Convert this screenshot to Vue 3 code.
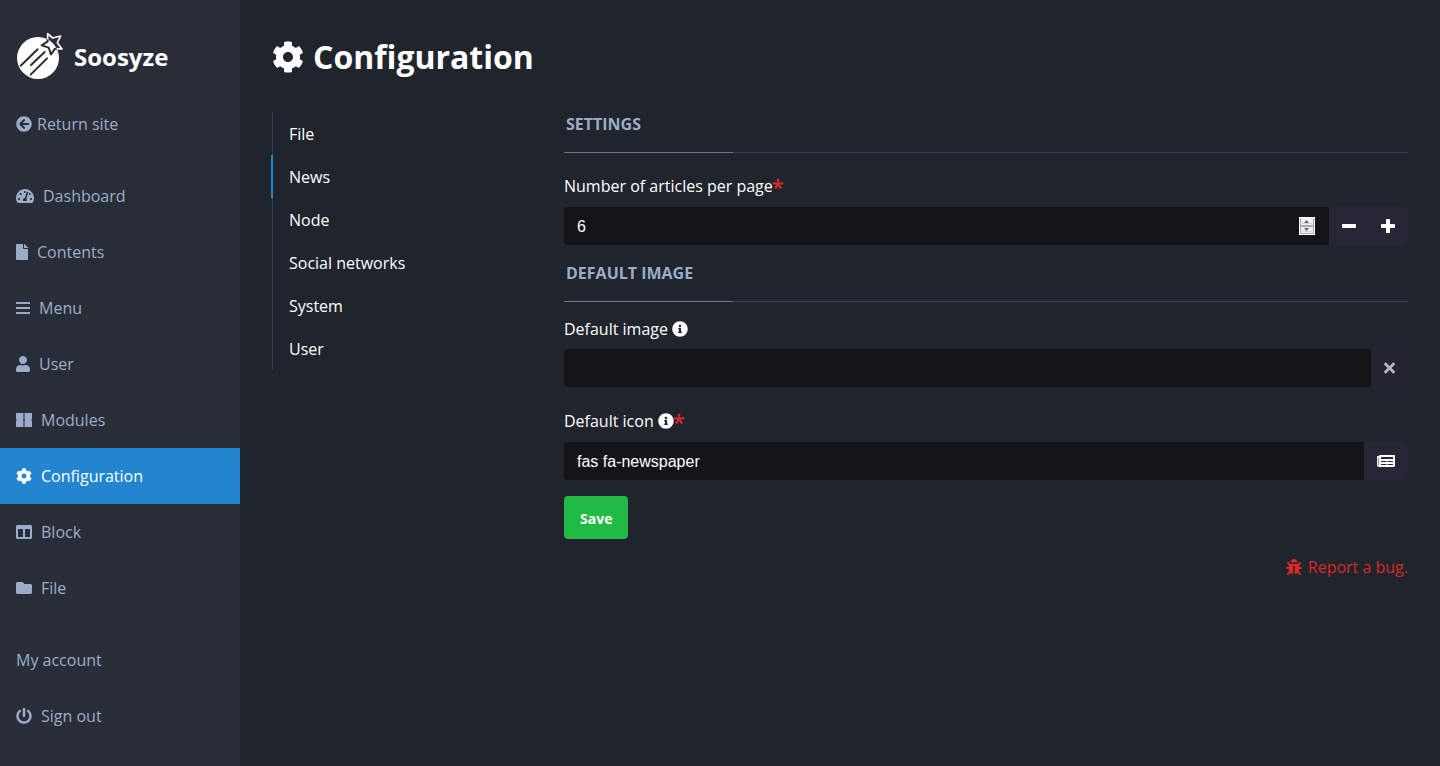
<script setup>
import { h, ref } from 'vue'

const icons = {
  back: { w: 512, d: 'M256 504C119 504 8 393 8 256S119 8 256 8s248 111 248 248-111 248-248 248zm28.9-143.6L209.4 288H392c13.3 0 24-10.7 24-24v-16c0-13.3-10.7-24-24-24H209.4l75.5-72.4c9.7-9.3 9.9-24.8.4-34.3l-11-10.9c-9.4-9.4-24.6-9.4-33.9 0L107.7 239c-9.4 9.4-9.4 24.6 0 33.9l132.7 132.7c9.4 9.4 24.6 9.4 33.9 0l11-10.9c9.5-9.5 9.3-25-.4-34.3z' },
  gauge: { w: 576, d: 'M288 32C128.94 32 0 160.94 0 320c0 52.8 14.25 102.26 39.06 144.8 5.61 9.62 16.3 15.2 27.44 15.2h443c11.14 0 21.83-5.58 27.44-15.2C561.75 422.26 576 372.8 576 320c0-159.06-128.94-288-288-288zm0 64c14.71 0 26.58 10.13 30.32 23.65-1.11 2.26-2.64 4.23-3.45 6.67l-9.22 27.67c-5.13 3.49-10.97 6.01-17.64 6.01-17.67 0-32-14.33-32-32S270.33 96 288 96zM96 384c-17.67 0-32-14.33-32-32s14.33-32 32-32 32 14.33 32 32-14.33 32-32 32zm48-160c-17.67 0-32-14.33-32-32s14.33-32 32-32 32 14.33 32 32-14.33 32-32 32zm246.77-72.41l-61.33 184C343.13 347.33 352 364.54 352 384c0 11.72-3.38 22.55-8.88 32H232.88c-5.5-9.45-8.88-20.28-8.88-32 0-33.94 26.5-61.43 59.9-63.59l61.34-184.01c4.17-12.56 17.73-19.45 30.36-15.17 12.57 4.19 19.35 17.79 15.17 30.36zm14.66 57.2l15.52-46.55c3.47-1.29 7.13-2.23 11.05-2.23 17.67 0 32 14.33 32 32s-14.33 32-32 32c-11.38-.01-20.89-6.28-26.57-15.22zM480 384c-17.67 0-32-14.33-32-32s14.33-32 32-32 32 14.33 32 32-14.33 32-32 32z' },
  file: { w: 384, d: 'M224 136V0H24C10.7 0 0 10.7 0 24v464c0 13.3 10.7 24 24 24h336c13.3 0 24-10.7 24-24V160H248c-13.2 0-24-10.8-24-24zm160-14.1v6.1H256V0h6.1c6.4 0 12.5 2.5 17 7l97.9 98c4.500 4.500 7 10.600 7 16.900z' },
  bars: { w: 448, d: 'M8 64h432q8 0 8 8v48q0 8-8 8H8q-8 0-8-8V72q0-8 8-8zM8 224h432q8 0 8 8v48q0 8-8 8H8q-8 0-8-8v-48q0-8 8-8zM8 384h432q8 0 8 8v48q0 8-8 8H8q-8 0-8-8v-48q0-8 8-8z' },
  user: { w: 448, d: 'M224 256c70.7 0 128-57.3 128-128S294.7 0 224 0 96 57.3 96 128s57.3 128 128 128zm89.6 32h-16.7c-22.2 10.2-46.9 16-72.9 16s-50.6-5.8-72.9-16h-16.7C60.2 288 0 348.2 0 422.400V464c0 26.500 21.500 48 48 48h352c26.500 0 48-21.500 48-48v-41.600c0-74.200-60.200-134.400-134.400-134.400z' },
  modules: { w: 512, d: 'M0 32H240V228L220 256L240 284V480H0V292L24 256L0 220ZM272 32H512V220L488 256L512 292V480H272V284L292 256L272 228Z' },
  cog: { w: 512, d: 'M487.4 315.7l-42.6-24.6c4.3-23.2 4.3-47 0-70.2l42.6-24.6c4.9-2.8 7.1-8.6 5.5-14-11.1-35.6-30-67.8-54.7-94.6-3.8-4.1-10-5.1-14.8-2.3L380.8 110c-17.9-15.4-38.5-27.3-60.8-35.1V25.8c0-5.6-3.9-10.5-9.4-11.7-36.7-8.2-74.3-7.8-109.2 0-5.5 1.2-9.4 6.1-9.4 11.7V75c-22.2 7.9-42.8 19.8-60.8 35.1L88.7 85.500c-4.900-2.800-11-1.900-14.800 2.300-24.700 26.700-43.600 58.900-54.700 94.600-1.700 5.400.6 11.200 5.500 14L67.300 221c-4.300 23.200-4.300 47 0 70.200l-42.600 24.600c-4.900 2.800-7.100 8.600-5.500 14 11.100 35.600 30 67.800 54.700 94.600 3.800 4.100 10 5.100 14.800 2.300l42.600-24.600c17.900 15.400 38.500 27.300 60.800 35.100v49.200c0 5.600 3.900 10.500 9.400 11.700 36.700 8.200 74.300 7.800 109.200 0 5.500-1.200 9.400-6.100 9.400-11.700v-49.200c22.200-7.900 42.800-19.800 60.800-35.100l42.600 24.600c4.900 2.800 11 1.900 14.800-2.300 24.700-26.700 43.600-58.900 54.700-94.600 1.500-5.500-.7-11.300-5.600-14.100zM256 336c-44.100 0-80-35.900-80-80s35.900-80 80-80 80 35.900 80 80-35.900 80-80 80z' },
  columns: { w: 512, d: 'M464 32H48C21.49 32 0 53.49 0 80v352c0 26.510 21.490 48 48 48h416c26.510 0 48-21.490 48-48V80c0-26.510-21.490-48-48-48zM224 416H64V160h160v256zm224 0H288V160h160v256z' },
  folder: { w: 512, d: 'M464 128H272l-64-64H48C21.490 64 0 85.490 0 112v288c0 26.510 21.490 48 48 48h416c26.510 0 48-21.490 48-48V176c0-26.510-21.490-48-48-48z' },
  power: { w: 512, d: 'M400 54.1c63 45 104 118.6 104 201.9 0 136.8-110.8 247.7-247.5 248C120 504.3 8.2 393 8 256.4 7.9 173.1 48.9 99.3 111.8 54.2c11.7-8.3 28-4.8 35 7.7L162.6 90c5.9 10.5 3.1 23.8-6.6 31-41.5 30.8-68 79.6-68 134.9-.1 92.3 74.5 168.1 168 168.1 91.6 0 168.6-74.2 168-169.1-.3-51.8-24.7-101.8-68.1-134-9.7-7.2-12.4-20.5-6.5-30.9l15.8-28.1c7-12.4 23.2-16.1 34.8-7.8zM296 264V24c0-13.300-10.700-24-24-24h-32c-13.300 0-24 10.700-24 24v240c0 13.300 10.700 24 24 24h32c13.300 0 24-10.700 24-24z' },
  info: { w: 512, d: 'M256 8C119.043 8 8 119.083 8 256c0 136.997 111.043 248 248 248s248-111.003 248-248C504 119.083 392.957 8 256 8zm0 110c23.196 0 42 18.804 42 42s-18.804 42-42 42-42-18.804-42-42 18.804-42 42-42zm56 254c0 6.627-5.373 12-12 12h-88c-6.627 0-12-5.373-12-12v-24c0-6.627 5.373-12 12-12h12v-64h-12c-6.627 0-12-5.373-12-12v-24c0-6.627 5.373-12 12-12h64c6.627 0 12 5.373 12 12v100h12c6.627 0 12 5.373 12 12v24z' },
  minus: { w: 448, d: 'M416 192H32c-17.67 0-32 14.33-32 32v64c0 17.67 14.33 32 32 32h384c17.67 0 32-14.33 32-32v-64c0-17.67-14.33-32-32-32z' },
  plus: { w: 448, d: 'M416 192H288V64c0-17.67-14.33-32-32-32h-64c-17.67 0-32 14.33-32 32v128H32c-17.67 0-32 14.33-32 32v64c0 17.67 14.33 32 32 32h128v128c0 17.67 14.33 32 32 32h64c17.67 0 32-14.33 32-32V320h128c17.67 0 32-14.33 32-32v-64c0-17.67-14.33-32-32-32z' },
  times: { w: 352, d: 'M242.72 256l100.07-100.07c12.28-12.28 12.28-32.19 0-44.48l-22.24-22.24c-12.28-12.28-32.19-12.28-44.48 0L176 189.28 75.93 89.21c-12.28-12.28-32.19-12.28-44.48 0L9.21 111.45c-12.28 12.28-12.28 32.19 0 44.48L109.28 256 9.21 356.07c-12.28 12.28-12.28 32.19 0 44.48l22.24 22.24c12.28 12.28 32.2 12.28 44.48 0L176 322.72l100.07 100.07c12.28 12.28 32.2 12.28 44.48 0l22.24-22.24c12.28-12.28 12.28-32.19 0-44.48L242.72 256z' },
  newspaper: { w: 576, d: 'M552 64H88c-13.255 0-24 10.745-24 24v8H24c-13.255 0-24 10.745-24 24v272c0 30.928 25.072 56 56 56h472c26.51 0 48-21.49 48-48V88c0-13.255-10.745-24-24-24zM56 400a8 8 0 0 1-8-8V144h16v248a8 8 0 0 1-8 8zm236-16H140c-6.627 0-12-5.373-12-12v-8c0-6.627 5.373-12 12-12h152c6.627 0 12 5.373 12 12v8c0 6.627-5.373 12-12 12zm208 0H348c-6.627 0-12-5.373-12-12v-8c0-6.627 5.373-12 12-12h152c6.627 0 12 5.373 12 12v8c0 6.627-5.373 12-12 12zm-208-96H140c-6.627 0-12-5.373-12-12v-8c0-6.627 5.373-12 12-12h152c6.627 0 12 5.373 12 12v8c0 6.627-5.373 12-12 12zm208 0H348c-6.627 0-12-5.373-12-12v-8c0-6.627 5.373-12 12-12h152c6.627 0 12 5.373 12 12v8c0 6.627-5.373 12-12 12zm0-96H140c-6.627 0-12-5.373-12-12v-40c0-6.627 5.373-12 12-12h360c6.627 0 12 5.373 12 12v40c0 6.627-5.373 12-12 12z' },
  bug: { w: 512, d: 'M511.988 288.9c-.478 17.43-15.217 31.1-32.653 31.1H424v16c0 21.864-4.882 42.584-13.6 61.145l60.228 60.228c12.496 12.497 12.496 32.758 0 45.255-12.498 12.497-32.759 12.496-45.256 0l-54.736-54.736C345.886 467.965 314.351 480 280 480V236c0-6.627-5.373-12-12-12h-24c-6.627 0-12 5.373-12 12v244c-34.351 0-65.886-12.035-90.636-32.108l-54.736 54.736c-12.498 12.497-32.759 12.496-45.256 0-12.496-12.497-12.496-32.758 0-45.255l60.228-60.228C92.882 378.584 88 357.864 88 336v-16H32.666C15.23 320 .491 306.33.013 288.9-.484 270.816 13.028 256 30 256h58v-58.745l-46.628-46.628c-12.496-12.497-12.496-32.758 0-45.255 12.498-12.497 32.758-12.497 45.256 0L141.255 160h229.489l54.627-54.627c12.498-12.497 32.758-12.497 45.256 0 12.496 12.497 12.496 32.758 0 45.255L424 197.255V256h58c16.972 0 30.484 14.816 29.988 32.9zM257 0c-61.856 0-112 50.144-112 112h224C369 50.144 318.856 0 257 0z' },
}

const Icon = (props) => h('svg', {
  class: 'icon',
  viewBox: `0 0 ${icons[props.name].w} 512`,
  width: icons[props.name].w * props.size / 512,
  height: props.size,
  fill: 'currentColor',
  'aria-hidden': 'true',
}, [h('path', { d: icons[props.name].d })])
Icon.props = { name: String, size: { type: Number, default: 16 } }

const adminLinks = [
  { label: 'Dashboard', icon: 'gauge' },
  { label: 'Contents', icon: 'file' },
  { label: 'Menu', icon: 'bars' },
  { label: 'User', icon: 'user' },
  { label: 'Modules', icon: 'modules' },
  { label: 'Configuration', icon: 'cog', active: true },
  { label: 'Block', icon: 'columns' },
  { label: 'File', icon: 'folder' },
]
const tabs = ['File', 'News', 'Node', 'Social networks', 'System', 'User']
const activeTab = ref('News')
const perPage = ref(6)
const image = ref('')
const iconName = ref('fas fa-newspaper')
</script>

<template>
  <div class="layout">
    <aside class="sidebar">
      <a class="brand" href="#">
        <svg width="48" height="48" viewBox="48 36 144 144" fill="none" aria-hidden="true">
          <defs><clipPath id="disc"><circle cx="114" cy="114" r="63" /></clipPath></defs>
          <circle cx="114" cy="114" r="63" fill="#fff" />
          <g stroke="#292d38" stroke-width="6" stroke-linecap="round">
            <path d="M62 137L113 88M93 135L134 96M92 164L141 115" />
          </g>
          <path d="M143 41L158 54L182 48L172 68L186 87L165 86L153 103L146 83L125 76L143 64Z" stroke="#fff" stroke-width="5" stroke-linejoin="round" />
          <path clip-path="url(#disc)" d="M143 41L158 54L182 48L172 68L186 87L165 86L153 103L146 83L125 76L143 64Z" stroke="#292d38" stroke-width="6" stroke-linejoin="round" />
        </svg>
        <span>Soosyze</span>
      </a>
      <nav aria-label="Administration">
        <ul class="menu">
          <li><a class="back" href="#"><Icon name="back" />Return site</a></li>
        </ul>
        <ul class="menu">
          <li v-for="link in adminLinks" :key="link.label">
            <a href="#" :class="{ active: link.active }"><Icon :name="link.icon" />{{ link.label }}</a>
          </li>
        </ul>
        <ul class="menu">
          <li><a href="#">My account</a></li>
          <li><a href="#"><Icon name="power" />Sign out</a></li>
        </ul>
      </nav>
    </aside>

    <main class="content">
      <h1><Icon name="cog" :size="32" />Configuration</h1>
      <div class="columns">
        <nav class="tabs-column" aria-label="Configuration sections">
          <ul class="tabs">
            <li v-for="tab in tabs" :key="tab">
              <a href="#" :class="{ active: tab === activeTab }" @click.prevent="activeTab = tab">{{ tab }}</a>
            </li>
          </ul>
        </nav>

        <div class="form-column">
          <form @submit.prevent>
            <section>
              <h2>Settings</h2>
              <div class="field">
                <label class="required" for="per-page">Number of articles per page<span class="star">*</span></label>
                <div class="group">
                  <div class="number">
                    <input id="per-page" v-model="perPage" type="number" min="1">
                    <svg width="16" height="18" viewBox="0 0 16 18" aria-hidden="true">
                      <path fill="#fff" d="M0 0h16v18H0z" />
                      <path fill="#a9a9b0" d="M1 1h14v16H1z" />
                      <path fill="#f1f1f1" d="M2 1h12v7H2zM2 10h12v6H2z" />
                      <path fill="#d5d8dc" d="M3 6h10v1H3zM3 14h10v1H3z" />
                      <path fill="#4d68b5" d="M5 6h5L7.500 3zM5 11h5L7.500 14z" />
                    </svg>
                  </div>
                  <button type="button" class="minus" aria-label="Decrease" @click="perPage--"><Icon name="minus" /></button>
                  <button type="button" class="plus" aria-label="Increase" @click="perPage++"><Icon name="plus" /></button>
                </div>
              </div>
            </section>

            <section>
              <h2>Default image</h2>
              <div class="field">
                <label for="image">Default image <Icon name="info" /></label>
                <div class="group">
                  <input id="image" v-model="image" type="text">
                  <button type="button" class="clear" aria-label="Clear" @click="image = ''"><Icon name="times" /></button>
                </div>
              </div>
              <div class="field">
                <label class="required" for="icon">Default icon <Icon name="info" /><span class="star">*</span></label>
                <div class="group">
                  <input id="icon" v-model="iconName" type="text">
                  <button type="button" class="preview" aria-label="Icon preview"><Icon name="newspaper" /></button>
                </div>
              </div>
            </section>
            <button class="save" type="submit">Save</button>
          </form>
          <footer><a href="#"><Icon name="bug" />Report a bug.</a></footer>
        </div>
      </div>
    </main>
  </div>
</template>

<style>
body {
  background: #20242c;
}
</style>

<style scoped>
.layout {
  display: flex;
  min-height: 100vh;
  background: #20242c;
  color: #fff;
  font: 16px/24px "Open Sans", "Noto Sans", sans-serif;
}
.layout * {
  box-sizing: border-box;
}
a {
  color: inherit;
  text-decoration: none;
}
ul {
  list-style: none;
  margin: 0;
  padding: 0;
}
.icon {
  flex: none;
}
.sidebar {
  flex: 0 0 240px;
  background: #292d38;
  color: #9badc8;
}
.brand {
  display: flex;
  align-items: center;
  gap: 10px;
  padding: 32px 16px 16px;
  color: #fff;
  font-size: 24px;
  font-weight: 700;
}
.brand span {
  padding-top: 2px;
}
.menu {
  margin-bottom: 16px;
}
.menu a {
  display: flex;
  align-items: center;
  gap: 9px;
  padding: 16px;
}
.menu .back {
  gap: 5px;
}
.menu .active {
  background: #2185d0;
  color: #fff;
}
.content {
  flex: 1;
  min-width: 0;
  padding: 32px;
}
h1 {
  display: flex;
  align-items: center;
  gap: 9px;
  margin: 0 0 30px;
  font-size: 32px;
  line-height: 50px;
}
.columns {
  display: flex;
}
.tabs-column {
  flex: 0 0 25%;
}
.tabs {
  border-left: 1px solid #3a3d4a;
}
.tabs a {
  display: block;
  margin-left: -2px;
  padding: 10px 16px 9px;
  border-left: 2px solid transparent;
}
.tabs .active {
  border-left-color: #2185d0;
}
.form-column {
  flex: 1;
  min-width: 0;
  padding-left: 8px;
}
h2 {
  position: relative;
  margin: 0 0 15px;
  padding: 0 2px 16px;
  border-bottom: 1px solid #3a3d4a;
  color: #9badc8;
  font-size: 16px;
  text-transform: uppercase;
}
h2::after {
  content: "";
  position: absolute;
  left: 0;
  bottom: -1px;
  width: 20%;
  height: 1px;
  background: #737885;
}
.field {
  margin-bottom: 16px;
}
label {
  display: flex;
  align-items: center;
  gap: 4px;
  margin-bottom: 8px;
}
.required {
  padding: 6px 0 1px;
}
.star {
  margin-left: -5px;
  color: #db2828;
  font-size: 22px;
  font-weight: 600;
}
.group {
  display: flex;
  height: 38px;
  border-radius: 4px;
  background: #131418;
  overflow: hidden;
}
.number {
  display: flex;
  flex: 1;
  align-items: center;
  padding-right: 14px;
}
input {
  flex: 1;
  min-width: 0;
  height: 38px;
  padding: 1px 13px 0;
  border: 0;
  background: transparent;
  color: #fff;
  font: 16px "Liberation Sans", Arial, sans-serif;
  appearance: textfield;
}
input::-webkit-inner-spin-button {
  display: none;
}
button {
  display: flex;
  align-items: center;
  justify-content: center;
  padding: 0;
  border: 0;
  background: #282635;
  color: #fff;
}
.minus {
  width: 39px;
}
.plus {
  width: 40px;
}
.clear {
  width: 37px;
  background: #242430;
  color: #b4b4b8;
}
.preview {
  width: 44px;
}
.save {
  padding: 2px 16px 0;
  height: 43px;
  border-radius: 4px;
  background: #21ba45;
  font: 700 14px/20px "Open Sans", "Noto Sans", sans-serif;
}
footer {
  display: flex;
  justify-content: flex-end;
  margin-top: 16px;
  color: #db2828;
}
footer a {
  display: flex;
  align-items: center;
  gap: 6px;
}
</style>
